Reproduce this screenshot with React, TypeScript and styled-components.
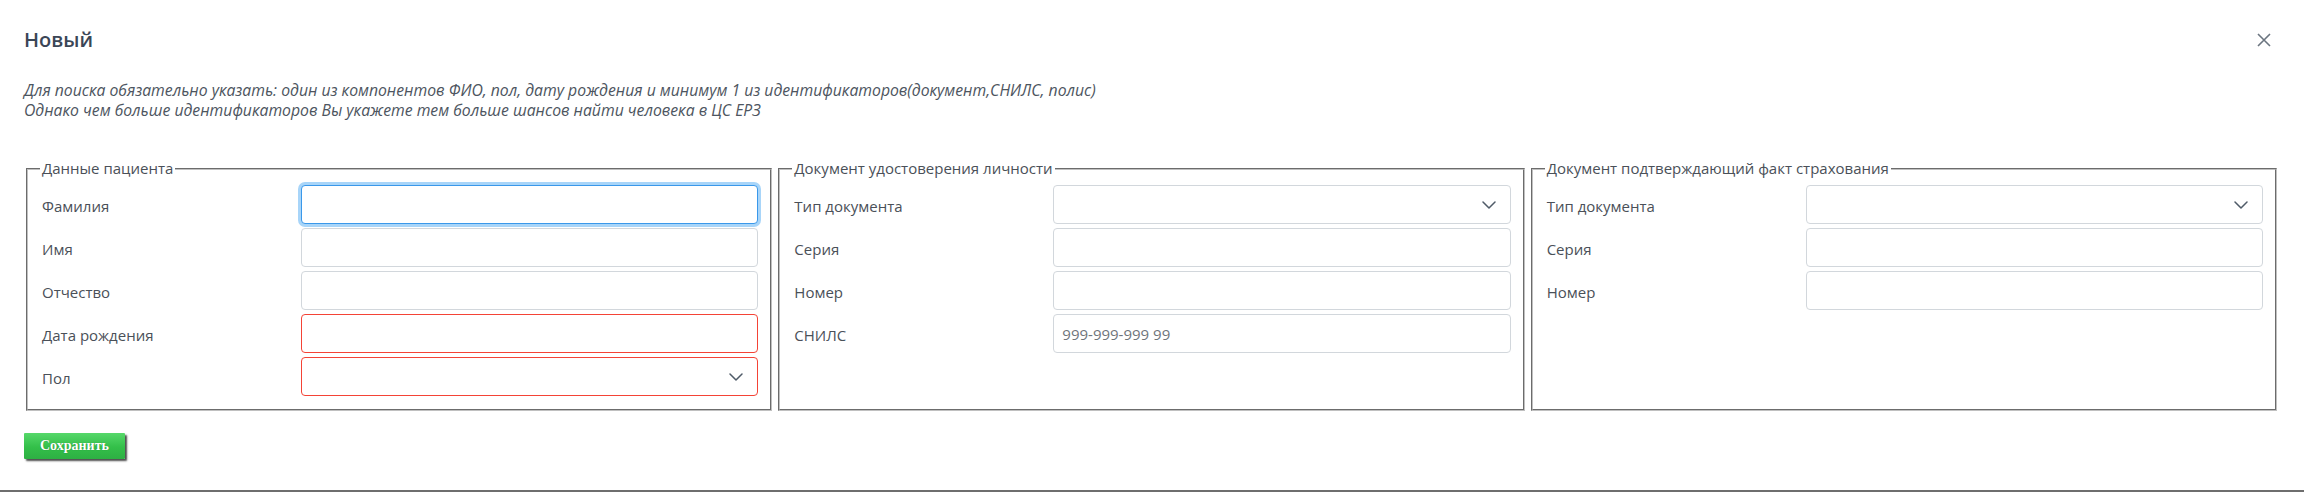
import styled, { createGlobalStyle, css } from 'styled-components'

const GlobalStyle = createGlobalStyle`
  * {
    box-sizing: border-box;
  }
  body {
    margin: 0;
    background: #fff;
    font-family: 'Open Sans', 'Liberation Sans', sans-serif;
    color: #495057;
  }
`

const Modal = styled.div`
  width: 100%;
  height: 492px;
  padding: 25px 25px 0 24px;
  border-bottom: 2px solid #6e6e6e;
`

const Header = styled.div`
  display: flex;
  flex-direction: row;
  align-items: center;
  justify-content: space-between;
  padding-right: 8px;
`

const Title = styled.h5`
  margin: 0;
  font-size: 20px;
  line-height: 30px;
  font-weight: 600;
  color: #3b4656;
`

const CloseButton = styled.span`
  width: 14px;
  height: 14px;
  display: flex;
  align-items: center;
  justify-content: center;
  & svg {
    width: 14px;
    height: 14px;
  }
`

const Hint = styled.p`
  margin: 25px 0 0 0;
  font-size: 15.75px;
  line-height: 20px;
  font-style: italic;
  color: #4d5560;
`

const Columns = styled.div`
  display: grid;
  grid-template-columns: repeat(3, 1fr);
  gap: 2px;
  margin-top: 38px;
`

const Group = styled.fieldset`
  margin: 0 2px;
  min-width: 0;
  padding: 6px 12px 13px 12px;
  border: 2px groove #c0c0c0;
`

const GroupTitle = styled.legend`
  padding: 0 2px;
  font-size: 15px;
  line-height: 21px;
  color: #4a5058;
`

const FieldGrid = styled.div`
  display: grid;
  grid-template-columns: 261px 1fr;
  row-gap: 4px;
  align-items: center;
`

const Label = styled.label`
  padding: 3px 0 0 2px;
  font-size: 15px;
  line-height: 21px;
  color: #4a5058;
`

const fieldBox = css<{ $state?: 'focus' | 'error' }>`
  height: 39px;
  width: 100%;
  border: 1px solid #d2d7dc;
  border-radius: 4px;
  background: #fff;
  ${(p) =>
    p.$state === 'focus' &&
    css`
      border-color: #3a98ea;
      box-shadow: 0 0 0 3px #a8d5f9;
    `}
  ${(p) =>
    p.$state === 'error' &&
    css`
      border-color: #f44336;
    `}
`

const TextInput = styled.input<{ $state?: 'focus' | 'error' }>`
  ${fieldBox};
  padding: 0 8px;
  font-family: 'Open Sans', 'Liberation Sans', sans-serif;
  font-size: 15px;
  color: #495057;
  outline: none;
  &::placeholder {
    color: #6f757b;
  }
`

const SelectBox = styled.div<{ $state?: 'focus' | 'error' }>`
  ${fieldBox};
  display: flex;
  align-items: center;
  justify-content: flex-end;
  padding-right: 14px;
  & svg {
    width: 14px;
    height: 8px;
  }
`

const SaveButton = styled.button`
  margin-top: 22px;
  height: 26px;
  padding: 0 16px;
  border: none;
  border-radius: 1px;
  background: linear-gradient(#56d86a, #33bf49 55%, #2db043);
  box-shadow: 2px 2px 2px rgba(0, 0, 0, 0.7);
  color: #fff;
  font-family: 'Liberation Serif', 'Times New Roman', serif;
  font-weight: bold;
  font-size: 14px;
  text-shadow: 0 0 1px rgba(0, 0, 0, 0.3);
`

type Field = {
  label: string
  kind?: 'select'
  state?: 'focus' | 'error'
  placeholder?: string
}

const groups: { title: string; fields: Field[] }[] = [
  {
    title: 'Данные пациента',
    fields: [
      { label: 'Фамилия', state: 'focus' },
      { label: 'Имя' },
      { label: 'Отчество' },
      { label: 'Дата рождения', state: 'error' },
      { label: 'Пол', kind: 'select', state: 'error' },
    ],
  },
  {
    title: 'Документ удостоверения личности',
    fields: [
      { label: 'Тип документа', kind: 'select' },
      { label: 'Серия' },
      { label: 'Номер' },
      { label: 'СНИЛС', placeholder: '999-999-999 99' },
    ],
  },
  {
    title: 'Документ подтверждающий факт страхования',
    fields: [{ label: 'Тип документа', kind: 'select' }, { label: 'Серия' }, { label: 'Номер' }],
  },
]

function Chevron() {
  return (
    <svg viewBox="0 0 14 8" fill="none">
      <path d="M1 1l6 6 6-6" stroke="#4f5b68" strokeWidth="1.5" strokeLinecap="round" strokeLinejoin="round" />
    </svg>
  )
}

function App() {
  return (
    <>
      <GlobalStyle />
      <Modal>
        <Header>
          <Title>Новый</Title>
          <CloseButton>
            <svg viewBox="0 0 14 14" fill="none">
              <path d="M1 1l12 12M13 1L1 13" stroke="#6b7580" strokeWidth="1.6" />
            </svg>
          </CloseButton>
        </Header>
        <Hint>
          Для поиска обязательно указать: один из компонентов ФИО, пол, дату рождения и минимум 1 из идентификаторов(документ,СНИЛС, полис)
          <br />
          Однако чем больше идентификаторов Вы укажете тем больше шансов найти человека в ЦС ЕРЗ
        </Hint>
        <Columns>
          {groups.map((g) => (
            <Group key={g.title}>
              <GroupTitle>{g.title}</GroupTitle>
              <FieldGrid>
                {g.fields.map((f) => (
                  <>
                    <Label key={f.label + '-l'}>{f.label}</Label>
                    {f.kind === 'select' ? (
                      <SelectBox key={f.label + '-s'} $state={f.state}>
                        <Chevron />
                      </SelectBox>
                    ) : (
                      <TextInput key={f.label + '-i'} $state={f.state} placeholder={f.placeholder} />
                    )}
                  </>
                ))}
              </FieldGrid>
            </Group>
          ))}
        </Columns>
        <SaveButton>Сохранить</SaveButton>
      </Modal>
    </>
  )
}

export default App
